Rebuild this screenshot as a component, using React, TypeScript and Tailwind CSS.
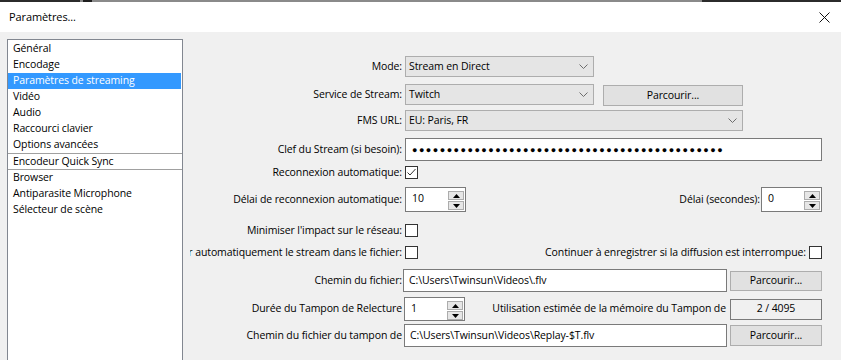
import React from 'react';

const listItems: { label: string; selected?: boolean; sep?: boolean }[] = [
  { label: 'Général' },
  { label: 'Encodage' },
  { label: 'Paramètres de streaming', selected: true },
  { label: 'Vidéo' },
  { label: 'Audio' },
  { label: 'Raccourci clavier' },
  { label: 'Options avancées' },
  { label: 'Encodeur Quick Sync', sep: true },
  { label: 'Browser' },
  { label: 'Antiparasite Microphone' },
  { label: 'Sélecteur de scène' },
];

const Chevron = () => (
  <svg width="9" height="5" viewBox="0 0 9 5" className="ml-auto mr-[5px] shrink-0">
    <path d="M0.5 0.5 L4.5 4.5 L8.5 0.5" fill="none" stroke="#6d6d6d" strokeWidth="1" />
  </svg>
);

const Combo = ({ value, className }: { value: string; className: string }) => (
  <div className={`flex items-center border border-[#adadad] bg-[#e5e5e5] pl-[3px] ${className}`}>
    <span className="whitespace-nowrap">{value}</span>
    <Chevron />
  </div>
);

const Button = ({ className }: { className: string }) => (
  <div className={`flex items-center justify-center border border-[#adadad] bg-[#e1e1e1] ${className}`}>
    Parcourir...
  </div>
);

const TextBox = ({ value, className }: { value: React.ReactNode; className: string }) => (
  <div className={`flex items-center border border-[#7a7a7a] bg-white pl-[5px] ${className}`}>
    <span className="whitespace-nowrap">{value}</span>
  </div>
);

const Checkbox = ({ checked }: { checked?: boolean }) => (
  <div className="h-[13px] w-[13px] shrink-0 border border-[#333333] bg-white">
    {checked && (
      <svg width="11" height="11" viewBox="0 0 11 11">
        <path d="M1.5 5.5 L4 8 L9.5 2" fill="none" stroke="#333333" strokeWidth="1" />
      </svg>
    )}
  </div>
);

const Spin = ({ value }: { value: string }) => (
  <div className="flex h-full w-[61px] shrink-0 border border-[#7a7a7a] bg-white">
    <span className="flex-1 pl-[6px] pt-[1px] leading-[18px]">{value}</span>
    <div className="flex flex-col gap-[1px] pr-[1px] pt-[3px]">
      <div className="flex h-[9px] w-[16px] items-center justify-center border border-[#acacac] bg-[#e6e6e6]">
        <svg width="7" height="4" viewBox="0 0 7 4">
          <path d="M0 4 L3.5 0 L7 4 Z" fill="#000" />
        </svg>
      </div>
      <div className="flex h-[9px] w-[16px] items-center justify-center border border-[#acacac] bg-[#e6e6e6]">
        <svg width="7" height="4" viewBox="0 0 7 4">
          <path d="M0 0 L3.5 4 L7 0 Z" fill="#000" />
        </svg>
      </div>
    </div>
  </div>
);

const Label = ({ children }: { children: React.ReactNode }) => (
  <div className="flex w-[215px] shrink-0 items-center justify-end self-stretch pr-[3px]">
    <span className="shrink-0 whitespace-nowrap">{children}</span>
  </div>
);

export default function App() {
  return (
    <div className="flex h-[360px] w-[841px] flex-col overflow-hidden bg-[#f0f0f0] font-['Segoe_UI','Open_Sans',sans-serif] text-[10.5px] tracking-[-0.1px] text-black">
      <div className="flex h-[2px] shrink-0">
        <div className="w-[80px] bg-[#2b2b2b]" />
        <div className="w-[3px] bg-[#888888]" />
        <div className="w-[9px] bg-[#1e1e1e]" />
        <div className="w-[610px] bg-[#8a8a8a]" />
        <div className="flex-1 bg-[#2b2b2b]" />
      </div>
      <div className="flex h-[30px] shrink-0 items-center bg-white pl-[9px] pr-[11px]">
        <span className="text-[11px]">Paramètres...</span>
        <svg width="11" height="11" viewBox="0 0 11 11" className="ml-auto">
          <path d="M0.5 0.5 L10.5 10.5 M10.5 0.5 L0.5 10.5" stroke="#111" strokeWidth="1" />
        </svg>
      </div>

      <div className="flex flex-1 pt-[7px]">
        <div className="ml-[7px] h-[340px] w-[176px] shrink-0 border border-[#828790] bg-white pt-[1px]">
          {listItems.map((item) => (
            <div
              key={item.label}
              className={`flex items-center whitespace-nowrap pl-[5px] ${
                item.sep ? 'h-[17px] border-y border-[#a0a0a0]' : 'h-[16px]'
              } ${item.selected ? 'mr-[1px] bg-[#3399ff] text-white' : ''}`}
            >
              {item.label}
            </div>
          ))}
        </div>

        <div className="ml-[7px] flex flex-1 flex-col overflow-hidden pr-[19px] pt-[17px]">
          <div className="flex h-[21px] shrink-0">
            <Label>Mode:</Label>
            <Combo value="Stream en Direct" className="w-[189px]" />
          </div>

          <div className="mt-[7px] flex h-[22px] shrink-0 items-start">
            <Label>Service de Stream:</Label>
            <Combo value="Twitch" className="h-[21px] w-[189px]" />
            <Button className="ml-[9px] mt-[1px] h-[21px] w-[140px]" />
          </div>

          <div className="mt-[4px] flex h-[21px] shrink-0">
            <Label>FMS URL:</Label>
            <Combo value="EU: Paris, FR" className="w-[338px]" />
          </div>

          <div className="mt-[7px] flex h-[23px] shrink-0">
            <Label>Clef du Stream (si besoin):</Label>
            <TextBox
              value={<span className="text-[9px] tracking-[1.5px]">{'●'.repeat(45)}</span>}
              className="flex-1 pl-[6px]"
            />
          </div>

          <div className="mt-[5px] flex h-[13px] shrink-0 items-center">
            <Label>Reconnexion automatique:</Label>
            <Checkbox checked />
          </div>

          <div className="mt-[8px] flex h-[25px] shrink-0 items-center">
            <Label>Délai de reconnexion automatique:</Label>
            <Spin value="10" />
            <span className="ml-auto mr-[1px] whitespace-nowrap">Délai (secondes):</span>
            <Spin value="0" />
          </div>

          <div className="mt-[12px] flex h-[13px] shrink-0 items-center">
            <Label>Minimiser l'impact sur le réseau:</Label>
            <Checkbox />
          </div>

          <div className="mt-[9px] flex h-[13px] shrink-0 items-center">
            <Label>Enregistrer automatiquement le stream dans le fichier:</Label>
            <Checkbox />
            <span className="ml-auto mr-[3px] whitespace-nowrap">
              Continuer à enregistrer si la diffusion est interrompue:
            </span>
            <Checkbox />
          </div>

          <div className="mt-[10px] flex h-[23px] shrink-0 items-start">
            <Label>Chemin du fichier:</Label>
            <TextBox value="C:\Users\Twinsun\Videos\.flv" className="-ml-[2px] h-[23px] w-[324px]" />
            <Button className="ml-[3px] mt-[2px] h-[20px] flex-1" />
          </div>

          <div className="mt-[5px] flex h-[24px] shrink-0 items-center">
            <Label>Durée du Tampon de Relecture</Label>
            <div className="-ml-[1px] h-[24px]">
              <Spin value="1" />
            </div>
            <span className="ml-auto mr-[4px] whitespace-nowrap">
              Utilisation estimée de la mémoire du Tampon de
            </span>
            <div className="flex h-[21px] w-[92px] items-center justify-center border border-[#7a7a7a] bg-[#f0f0f0]">
              2 / 4095
            </div>
          </div>

          <div className="mt-[3px] flex h-[23px] shrink-0 items-start">
            <Label>Chemin du fichier du tampon de</Label>
            <TextBox value="C:\Users\Twinsun\Videos\Replay-$T.flv" className="-ml-[1px] h-[23px] w-[323px]" />
            <Button className="ml-[3px] mt-[1px] h-[21px] flex-1" />
          </div>
        </div>
      </div>
    </div>
  );
}
